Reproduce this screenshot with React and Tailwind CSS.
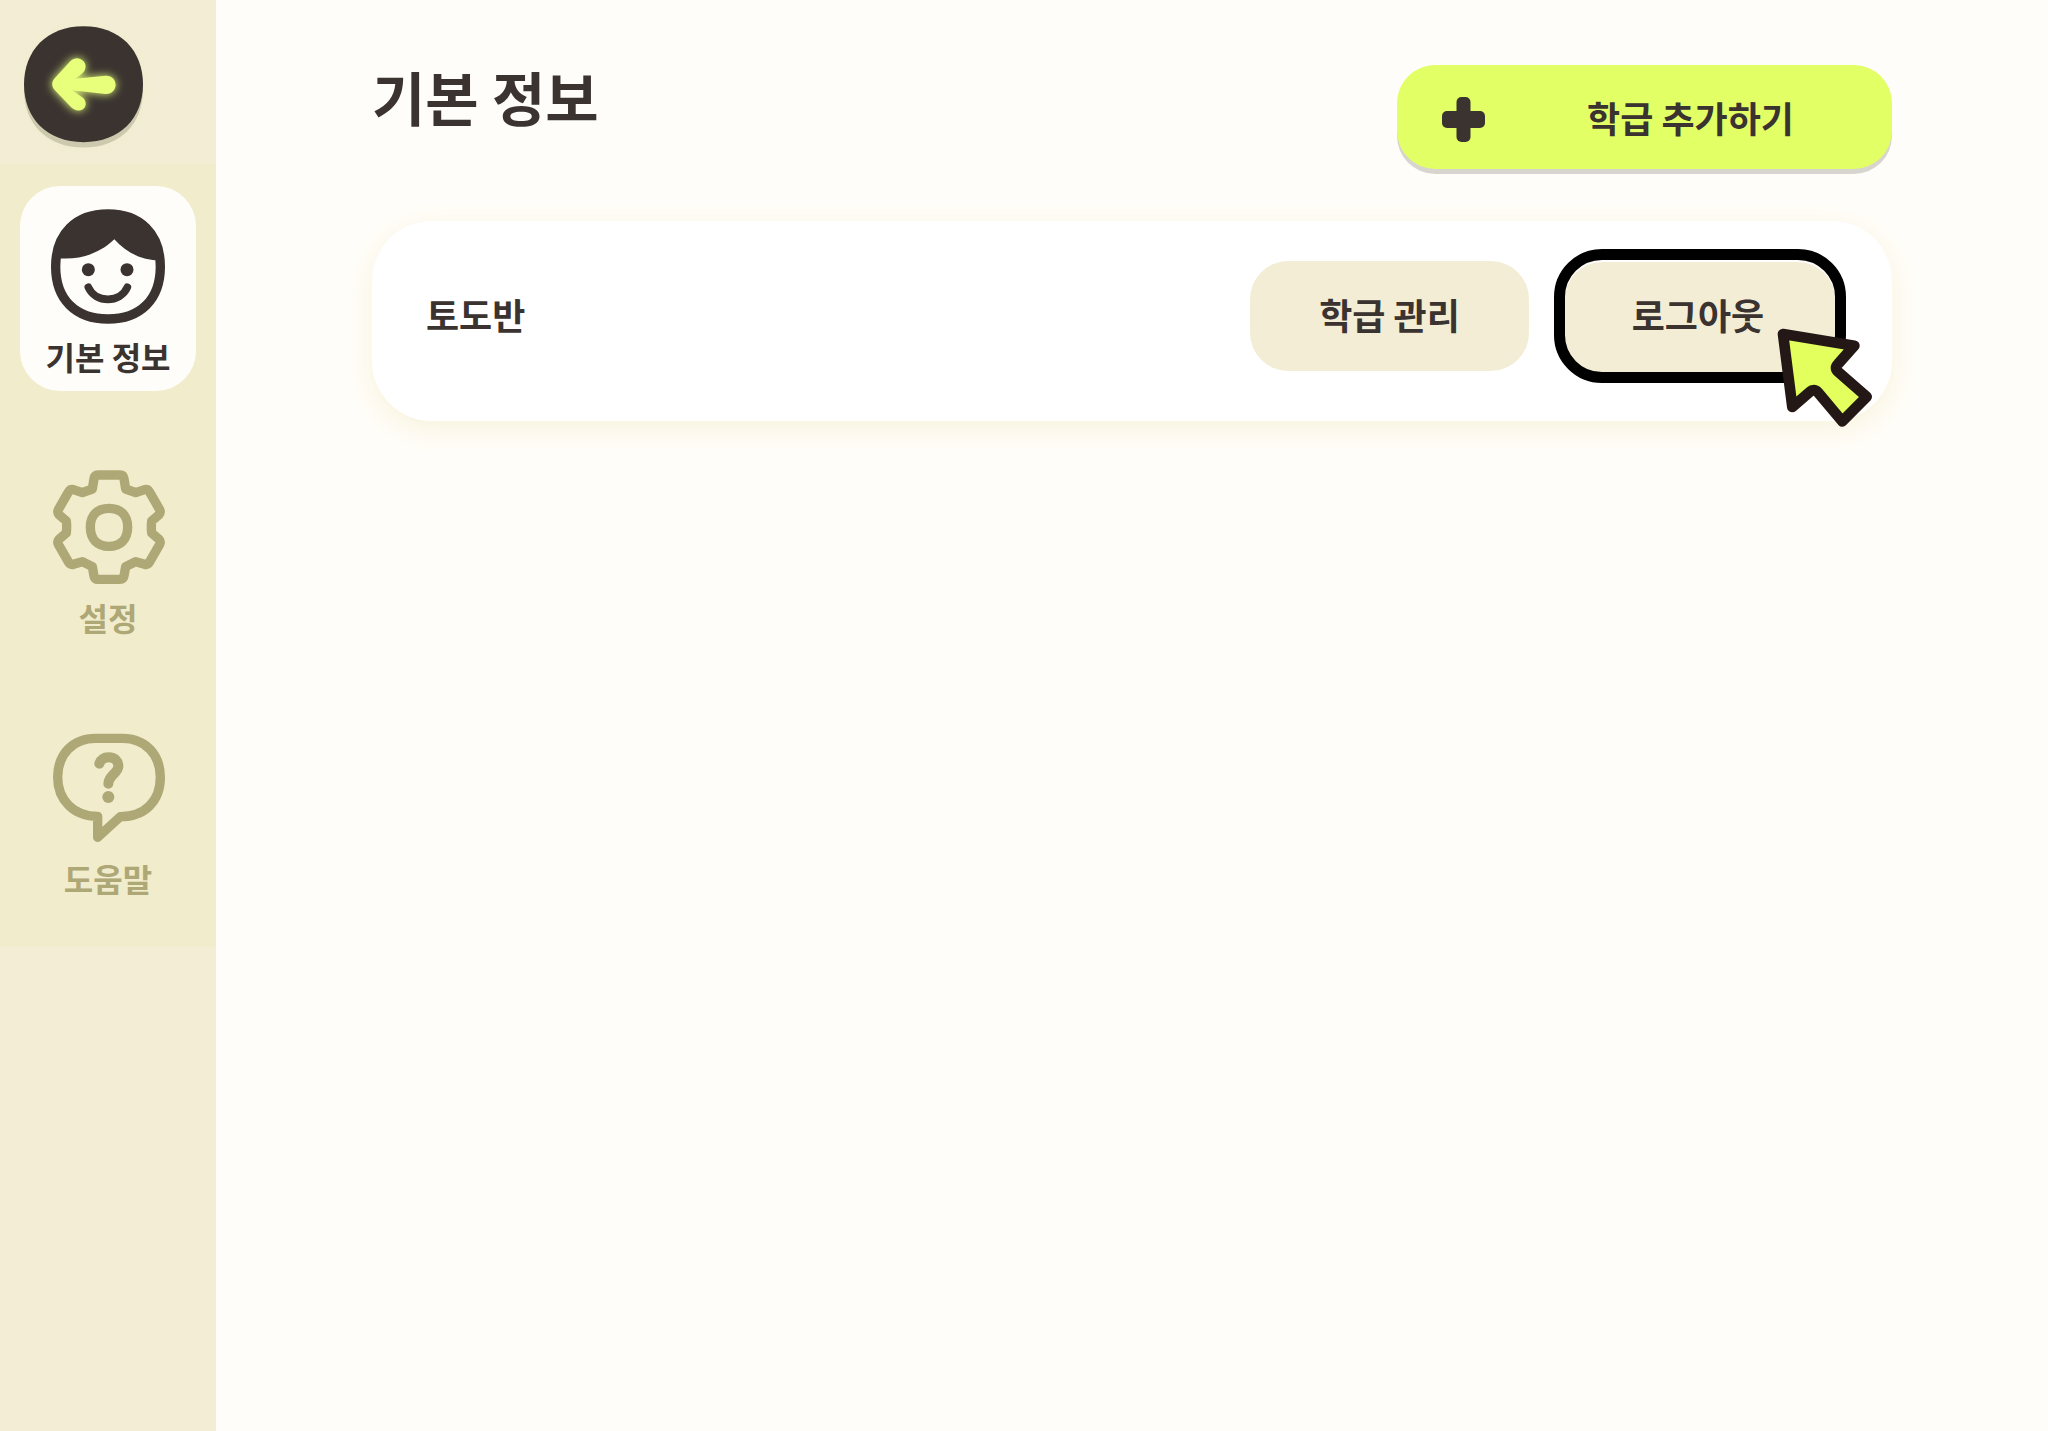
import React from 'react';
import clsx from 'clsx';

const FaceIcon = () => (
    <svg viewBox="150 84 348 348" className="w-[116px] h-[116px]" fill="none" stroke="currentColor" aria-hidden="true">
        <path d="M324 102C421 102 481 162 481 260C481 358 421 417 324 417C227 417 167 358 167 260C167 162 227 102 324 102Z" strokeWidth="28" />
        <path d="M167 234C240 242 300 220 343 178C375 215 420 240 481 242C476 160 421 102 324 102C227 102 172 160 167 234Z" fill="currentColor" stroke="none" />
        <circle cx="265" cy="269" r="19.5" fill="currentColor" stroke="none" />
        <circle cx="381" cy="269" r="19.5" fill="currentColor" stroke="none" />
        <path d="M265 322C286 370 361 370 382 322" strokeWidth="23" strokeLinecap="round" />
    </svg>
);

const GearIcon = () => (
    <svg viewBox="150 57 348 348" className="w-[116px] h-[116px]" fill="none" stroke="currentColor" strokeWidth="28" strokeLinejoin="round" aria-hidden="true">
        <path d="M294 75H360Q370 75 372 86L377 117L407 128L434 119Q443 117 448 125L479 179Q483 187 477 194L455 213Q453 231 455 249L477 268Q483 275 479 283L448 337Q443 345 434 343L407 335L377 350L372 378Q370 388 360 388H294Q284 388 282 378L277 350L247 335L220 343Q211 345 206 337L175 283Q171 275 177 268L199 249Q201 231 199 213L177 194Q171 187 175 179L206 125Q211 117 220 119L247 128L277 117L282 86Q284 75 294 75Z" />
        <path d="M327 175C362 175 383 196 383 231C383 267 362 289 327 289C292 289 271 267 271 231C271 196 292 175 327 175Z" />
    </svg>
);

const HelpIcon = () => (
    <svg viewBox="150 61 348 348" className="w-[116px] h-[116px]" fill="none" stroke="currentColor" strokeLinejoin="round" strokeLinecap="round" aria-hidden="true">
        <path d="M287 86H367C438 86 481 136 481 203C481 274 435 321 361 321L293 383V320C220 320 173 270 173 203C173 136 216 86 287 86Z" strokeWidth="28" />
        <path d="M298 162C303 149 312 143 326 143C345 143 355 154 355 170C355 190 325 198 325 222" strokeWidth="30" />
        <circle cx="325" cy="262" r="18" fill="currentColor" stroke="none" />
    </svg>
);

const BackIcon = () => (
    <svg viewBox="72 77 358 366" className="w-[119px] h-[122px]" aria-hidden="true">
        <path d="M251 94C361 94 430 166 430 268C430 371 361 442 251 442C141 442 72 371 72 268C72 166 141 94 251 94Z" fill="#cdc9ae" />
        <path d="M251 77C361 77 430 150 430 252C430 355 361 426 251 426C141 426 72 355 72 252C72 150 141 77 251 77Z" fill="#3a3330" />
        <path
            d="M165 233L212 182C234 160 268 184 254 211C248 220 238 227 225 235L318 226C357 225 358 281 318 281L216 270L246 290C262 299 262 324 243 330C230 333 222 328 214 321L165 270C154 258 154 244 165 233Z"
            fill="#e8ff7c"
            className="drop-shadow-[0_0_14px_#e8ff7c]"
        />
    </svg>
);

const PlusIcon = () => (
    <svg viewBox="0 0 43 45" className="w-[43px] h-[45px] shrink-0" fill="currentColor" aria-hidden="true">
        <rect x="14.5" width="14" height="45" rx="5" />
        <rect y="14" width="43" height="17" rx="5" />
    </svg>
);

const PointerIcon = () => (
    <svg viewBox="742 295 288 297" className="absolute -right-[38px] -bottom-[55px] w-[96px] h-[99px] pointer-events-none" aria-hidden="true">
        <path
            d="M760 313L974 348L926 402Q912 415 926 427L1011 501L938 575L864 487Q853 475 840 487L788 532Z"
            fill="#e2ff5e"
            stroke="#231815"
            strokeWidth="32"
            strokeLinejoin="round"
        />
    </svg>
);

const MENU = [
    { id: 'info', label: '기본 정보', Icon: FaceIcon },
    { id: 'settings', label: '설정', Icon: GearIcon },
    { id: 'help', label: '도움말', Icon: HelpIcon },
];

/**
 * Sidebar entry: icon over its label
 */
const MenuItem = ({ item, active }) => (
    <li className="pt-[22px] pb-[34px] px-5">
        <a
            href={`#${item.id}`}
            aria-current={active ? 'page' : undefined}
            className={clsx(
                'flex flex-col items-center h-[205px] pt-[22px] rounded-[40px]',
                active ? 'bg-[#fffdf9] text-[#3a3330]' : 'text-[#aea776]'
            )}
        >
            <item.Icon />
            <span className="mt-2 text-[32px] leading-[48px] whitespace-nowrap">{item.label}</span>
        </a>
    </li>
);

const ClassCard = ({ name }) => (
    <section className="flex items-center bg-white rounded-[60px] pt-7 pb-[38px] pl-[54px] pr-[46px] shadow-[0_8px_28px_#f8f3dc]">
        <h2 className="flex-1 pb-1 text-[36px] leading-[54px]">{name}</h2>
        <div className="flex items-center gap-[25px]">
            <button type="button" className="w-[279px] h-[110px] pb-1 rounded-[38px] bg-[#f3edd6] text-[36px] leading-[54px]">
                학급 관리
            </button>
            <button
                type="button"
                className="relative w-[292px] h-[134px] pb-1 pr-1 rounded-[48px] border-11 border-black bg-[#f3edd6] shadow-[inset_0_2px_0_#fff] text-[36px] leading-[54px]"
            >
                로그아웃
                <PointerIcon />
            </button>
        </div>
    </section>
);

export default function App() {
    return (
        <div className="flex min-h-screen bg-[#fffdf9] text-[#3a3330] font-bold font-['Noto_Sans_CJK_KR',sans-serif]">
            <aside className="w-[216px] shrink-0 bg-[#f3edd6]">
                <div className="h-[164px] pt-[26px] pl-6">
                    <button type="button" aria-label="뒤로" className="block rounded-full shadow-[0_0_16px_#f0eccb]">
                        <BackIcon />
                    </button>
                </div>
                <nav className="bg-[#f1eccb]">
                    <ul>
                        {MENU.map((item) => (
                            <MenuItem key={item.id} item={item} active={item.id === 'info'} />
                        ))}
                    </ul>
                </nav>
            </aside>

            <main className="flex-1 pt-[65px] px-[156px]">
                <header className="flex items-start justify-between mb-[52px]">
                    <h1 className="text-[58px] leading-[62px]">기본 정보</h1>
                    <button
                        type="button"
                        className="flex items-center w-[495px] h-[104px] pt-1 pl-[45px] rounded-[38px] bg-[#e2ff66] shadow-[0_5px_0_#d8d5cf] text-[36px] leading-[54px]"
                    >
                        <PlusIcon />
                        <span className="flex-1 pb-1 pl-1 text-center">학급 추가하기</span>
                    </button>
                </header>
                <ClassCard name="토도반" />
            </main>
        </div>
    );
}
